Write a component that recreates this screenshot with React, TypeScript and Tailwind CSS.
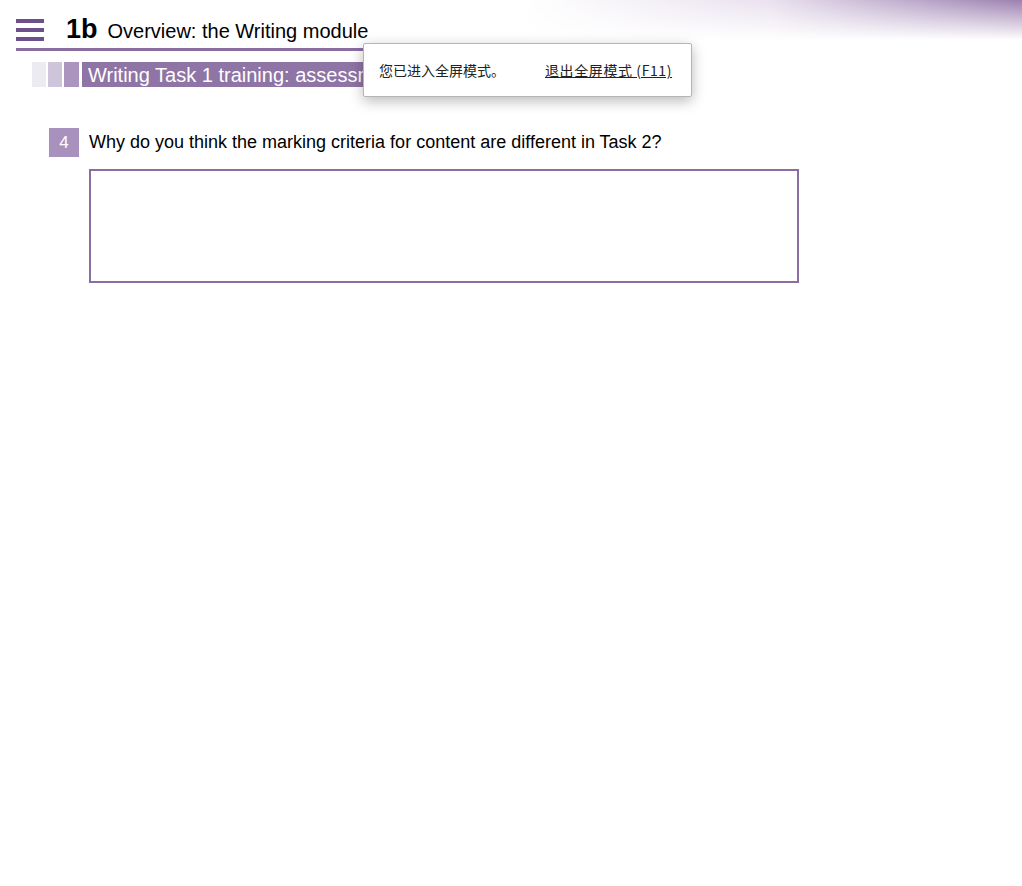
export default function App() {
  return (
    <div className="relative min-h-[886px] w-full overflow-hidden bg-white font-['Liberation_Sans',Arial,sans-serif] text-black">
      {/* top-right purple wash */}
      <div className="pointer-events-none absolute right-0 top-0 h-[40px] w-[500px] bg-gradient-to-r from-white via-[#e9e1ee] to-[#9c80b0]">
        <div className="h-full w-full bg-gradient-to-b from-transparent to-white" />
      </div>

      <header className="relative px-4 pt-[12px]">
        <div className="flex items-center gap-[22px]">
          <div className="flex h-[22px] w-[28px] flex-col justify-between">
            <span className="h-[4px] w-full bg-[#6d4f8c]" />
            <span className="h-[4px] w-full bg-[#6d4f8c]" />
            <span className="h-[4px] w-full bg-[#6d4f8c]" />
          </div>
          <div className="flex items-baseline gap-[10px]">
            <span className="text-[27px] font-bold leading-[34px]">1b</span>
            <span className="text-[20px] leading-[34px]">Overview: the Writing module</span>
          </div>
        </div>
        <div className="h-[3px] w-[540px] bg-[#8a6ea2]" />
      </header>

      <div className="mt-[11px] flex h-[25px] items-stretch pl-[32px]">
        <span className="w-[14px] bg-[#ecebf2]" />
        <span className="ml-[2px] w-[14px] bg-[#cfc5db]" />
        <span className="ml-[2px] w-[15px] bg-[#ab95be]" />
        <div className="ml-[3px] flex w-[320px] items-center overflow-hidden whitespace-nowrap bg-[#8f74a6] pl-[6px] text-[20px] text-white">
          Writing Task 1 training: assessm
        </div>
      </div>

      <section className="mt-[41px] pl-[49px]">
        <div className="flex items-center gap-[10px]">
          <span className="flex h-[29px] w-[30px] items-center justify-center bg-[#a991bd] text-[17px] text-white">4</span>
          <p className="text-[18px]">Why do you think the marking criteria for content are different in Task 2?</p>
        </div>
        <textarea className="ml-[40px] mt-[12px] block h-[114px] w-[710px] resize-none border-2 border-[#8a6ea2] outline-none" />
      </section>

      {/* fullscreen notice */}
      <div className="absolute left-[363px] top-[43px] flex h-[54px] w-[329px] items-center rounded-[2px] border border-[#b5b5b5] bg-white pl-[15px] text-[14px] text-[#222] shadow-[0_4px_14px_rgba(0,0,0,0.28)] font-['Noto_Sans_CJK_SC',sans-serif]">
        <span>您已进入全屏模式。</span>
        <a className="ml-[40px] tracking-[0.6px] underline">退出全屏模式 (F11)</a>
      </div>
    </div>
  );
}
